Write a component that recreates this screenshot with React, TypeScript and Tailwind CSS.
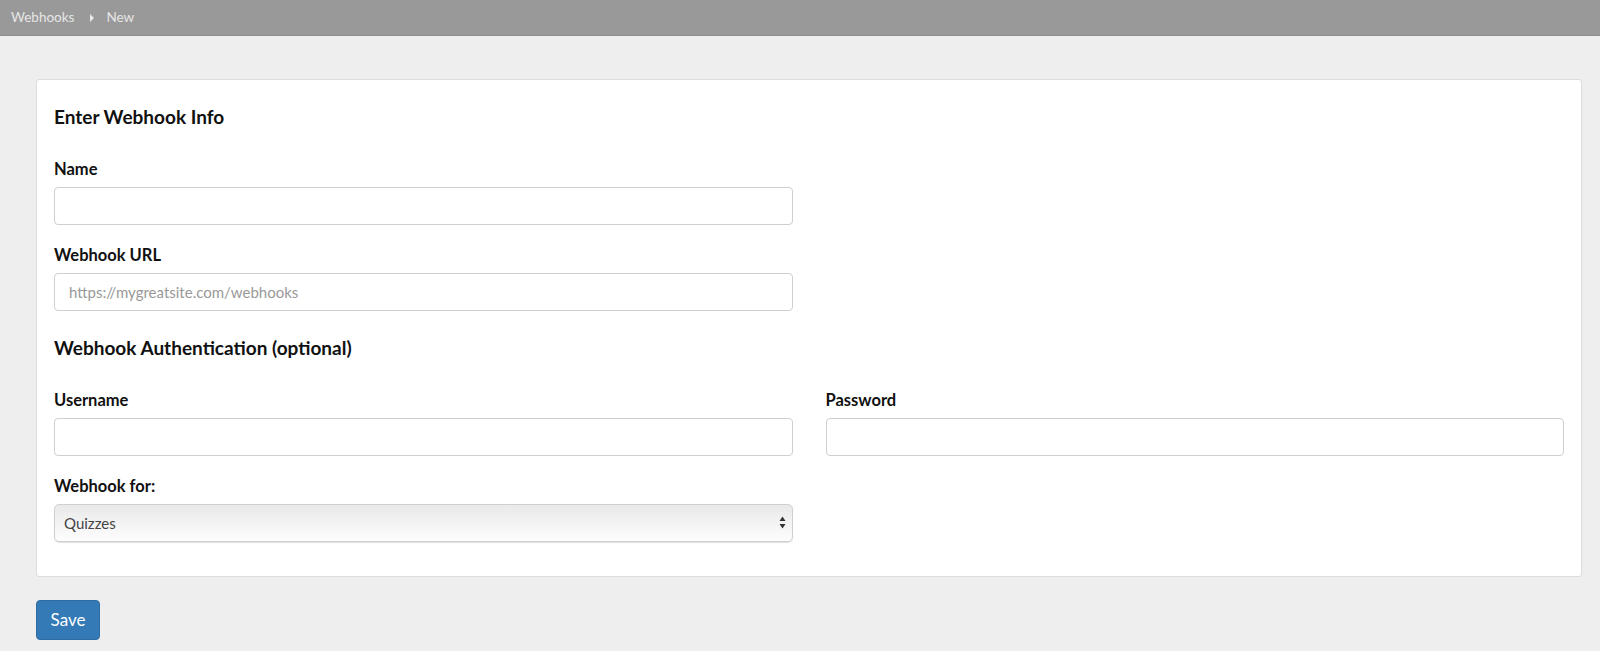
import { useState } from 'react';

function Label({ children }: { children: React.ReactNode }) {
  return <label className="block text-[16.5px] font-bold leading-[20px] text-[#111] mb-[8px]">{children}</label>;
}

function TextInput({ placeholder, type = 'text' }: { placeholder?: string; type?: string }) {
  return (
    <input
      type={type}
      placeholder={placeholder}
      className="block w-full h-[38px] rounded-[4px] border border-[#cfcfcf] bg-white px-[14px] text-[15px] text-[#555] placeholder:text-[#999] outline-none"
    />
  );
}

export default function App() {
  const [target, setTarget] = useState('Quizzes');

  return (
    <div className="min-h-[651px] bg-[#eeeeee] font-['Lato','Open_Sans',sans-serif]">
      <div className="h-[36px] bg-[#999999] border-b border-[#8e8e8e] flex items-center pl-[11px] text-[13.5px] text-[#e6e6e6]">
        <span>Webhooks</span>
        <svg width="6" height="8" viewBox="0 0 6 8" className="ml-[15px] mr-[11px]">
          <path d="M1 0 L5 4 L1 8 Z" fill="#eaeaea" />
        </svg>
        <span>New</span>
      </div>

      <div className="pl-[36px] pr-[18px] pt-[43px] pb-[13px]">
        <div className="rounded-[3px] border border-[#dcdcdc] bg-white px-[17px] pt-[25px] pb-[34px]">
          <h2 className="text-[19px] font-bold leading-[23px] text-[#111]">Enter Webhook Info</h2>

          <div className="grid grid-cols-2 gap-x-[33px] mt-[31px]">
            <div>
              <Label>Name</Label>
              <TextInput />
            </div>
            <div />
          </div>

          <div className="grid grid-cols-2 gap-x-[33px] mt-[20px]">
            <div>
              <Label>Webhook URL</Label>
              <TextInput placeholder="https://mygreatsite.com/webhooks" />
            </div>
            <div />
          </div>

          <h2 className="text-[19px] font-bold leading-[23px] text-[#111] mt-[25px]">
            Webhook Authentication (optional)
          </h2>

          <div className="grid grid-cols-2 gap-x-[33px] mt-[31px]">
            <div>
              <Label>Username</Label>
              <TextInput />
            </div>
            <div>
              <Label>Password</Label>
              <TextInput type="password" />
            </div>
          </div>

          <div className="grid grid-cols-2 gap-x-[33px] mt-[20px]">
            <div>
              <Label>Webhook for:</Label>
              <div className="relative">
                <select
                  value={target}
                  onChange={(e) => setTarget(e.target.value)}
                  className="appearance-none block w-full h-[38px] rounded-[5px] border border-[#d0d0d0] bg-gradient-to-b from-[#e9e9e9] to-[#fdfdfd] px-[9px] text-[15px] text-[#444] shadow-[0_1px_1px_rgba(0,0,0,0.12)] outline-none"
                >
                  <option>Quizzes</option>
                  <option>Surveys</option>
                </select>
                <svg width="7" height="13" viewBox="0 0 7 13" className="absolute right-[7px] top-[12px] pointer-events-none">
                  <path d="M3.5 0.5 L6.5 5 L0.5 5 Z" fill="#333" />
                  <path d="M0.5 8 L6.5 8 L3.5 12.5 Z" fill="#333" />
                </svg>
              </div>
            </div>
            <div />
          </div>
        </div>

        <button className="mt-[23px] h-[40px] w-[64px] rounded-[4px] border border-[#2e6da4] bg-[#337ab7] text-[17px] text-white">
          Save
        </button>
      </div>
    </div>
  );
}
